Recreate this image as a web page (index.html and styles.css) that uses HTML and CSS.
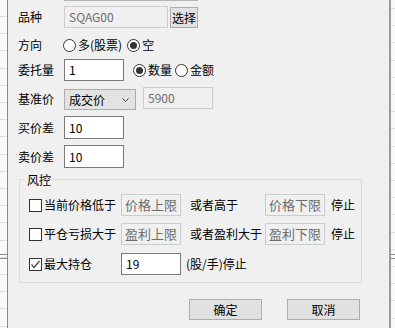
FILE: index.html
```html
<!DOCTYPE html>
<html lang="zh-CN">
<head>
<meta charset="utf-8">
<title>风控设置</title>
<link rel="stylesheet" href="styles.css">
</head>
<body>
<div class="screen">
  <div class="strip strip-left"></div>
  <div class="dialog">
    <div class="cut"></div>
    <div class="row r1">
      <span class="label">品种</span>
      <span class="input off w-code">SQAG00</span>
      <span class="btn btn-small">选择</span>
    </div>
    <div class="row r2">
      <span class="label">方向</span>
      <span class="radio first"><span class="radio-mark"></span>多(股票)</span>
      <span class="radio gap5"><span class="radio-mark on"></span>空</span>
    </div>
    <div class="row r3">
      <span class="label">委托量</span>
      <span class="input w60">1</span>
      <span class="radio gap9"><span class="radio-mark on"></span>数量</span>
      <span class="radio gap3"><span class="radio-mark"></span>金额</span>
    </div>
    <div class="row r4">
      <span class="label lbl-mid">基准价</span>
      <span class="combo">成交价<svg class="chev" width="7" height="4" viewBox="0 0 7 4"><polyline points="0.5,0.5 3.5,3.5 6.5,0.5" fill="none" stroke="#444" stroke-width="1"/></svg></span>
      <span class="input off w70">5900</span>
    </div>
    <div class="row r5">
      <span class="label">买价差</span>
      <span class="input w60 tall">10</span>
    </div>
    <div class="row r6">
      <span class="label">卖价差</span>
      <span class="input w60 tall">10</span>
    </div>
    <div class="group">
      <span class="legend">风控</span>
      <div class="grow ga">
        <span class="chk-label"><span class="check"></span>当前价格低于</span>
        <span class="input off w60 ph">价格上限</span>
        <span class="mid">或者高于</span>
        <span class="input off w60 ph">价格下限</span>
        <span class="stop">停止</span>
      </div>
      <div class="grow gb">
        <span class="chk-label"><span class="check"></span>平仓亏损大于</span>
        <span class="input off w60 ph">盈利上限</span>
        <span class="mid">或者盈利大于</span>
        <span class="input off w60 ph">盈利下限</span>
        <span class="stop">停止</span>
      </div>
      <div class="grow gc">
        <span class="chk-label"><span class="check on"><svg width="11" height="11" viewBox="0 0 11 11"><polyline points="1.5,5.5 4,8.5 9.5,2" fill="none" stroke="#444" stroke-width="1.2"/></svg></span>最大持仓</span>
        <span class="input w60">19</span>
        <span class="unit">(股/手)停止</span>
      </div>
    </div>
    <div class="buttons">
      <span class="btn">确定</span>
      <span class="btn">取消</span>
    </div>
  </div>
  <div class="strip strip-right"></div>
</div>
</body>
</html>
```
FILE: styles.css
```css
* { box-sizing: border-box; }
html, body { margin: 0; padding: 0; }
body {
  font-family: "Noto Sans CJK SC", "Microsoft YaHei", sans-serif;
  font-size: 12px;
  line-height: 14px;
  color: #000;
  background: #f8f8f8;
}
.screen {
  display: flex;
  width: 395px;
  height: 328px;
  overflow: hidden;
}
.strip {
  background-color: #f9f9f9;
  background-image:
    linear-gradient(to bottom, transparent 254px, #8c8c8c 254px, #8c8c8c 255px, transparent 255px, transparent 258px, #8c8c8c 258px, #8c8c8c 259px, transparent 259px),
    repeating-linear-gradient(to bottom, transparent 0, transparent 16px, #dedede 16px, #dedede 17px, transparent 17px, transparent 17.2px);
}
.strip-left { width: 7px; }
.strip-right {
  width: 4px;
  background-image:
    linear-gradient(to bottom, transparent 254px, #8c8c8c 254px, #8c8c8c 255px, transparent 255px, transparent 258px, #8c8c8c 258px, #8c8c8c 259px, transparent 259px),
    repeating-linear-gradient(to bottom, transparent 0, transparent 8px, #dedede 8px, #dedede 9px, transparent 9px, transparent 17.2px);
}
.dialog {
  width: 384px;
  border-left: 1px solid #8a8a8a;
  border-right: 2px solid #9a9a9a;
  background: #f0f0f0;
  display: flex;
  flex-direction: column;
}
.cut {
  height: 1px;
  width: 134px;
  margin-left: 56px;
  background: #b4b4b4;
  flex: none;
}
.row {
  display: flex;
  align-items: center;
  height: 22px;
  padding-left: 10px;
  flex: none;
}
.label { width: 46px; flex: none; }
.r1 { margin-top: 5px; }
.r2 { margin-top: 6px; }
.r3 { margin-top: 3px; }
.r4 { margin-top: 6px; height: 23px; align-items: flex-start; }
.r4 .lbl-mid { align-self: center; }
.r5 { margin-top: 6px; height: 23px; }
.r6 { margin-top: 6px; height: 23px; }

.input {
  height: 22px;
  border: 1px solid #7a7a7a;
  background: #fff;
  padding: 0 4px;
  display: flex;
  align-items: center;
  flex: none;
  white-space: nowrap;
}
.input.tall { height: 23px; }
.input.off {
  border-color: #cccccc;
  background: #f0f0f0;
  color: #6d6d6d;
}
.input.ph { font-size: 13px; padding: 0 3px; }
.w-code { width: 104px; }
.w60 { width: 60px; }
.w70 { width: 70px; margin-left: 7px; }

.btn {
  width: 73px;
  height: 21px;
  border: 1px solid #adadad;
  background: #e1e1e1;
  display: flex;
  align-items: center;
  justify-content: center;
  flex: none;
}
.btn-small {
  width: 28px;
  margin-left: 2px;
  align-self: flex-end;
}

.radio {
  display: flex;
  align-items: center;
  gap: 2px;
  flex: none;
}
.radio.first { margin-left: -1px; }
.radio.gap5 { margin-left: 5px; }
.radio.gap9 { margin-left: 9px; }
.radio.gap3 { margin-left: 3px; }
.radio-mark {
  width: 13px;
  height: 13px;
  border-radius: 50%;
  border: 1px solid #333;
  background: #fff;
  display: flex;
  align-items: center;
  justify-content: center;
}
.radio-mark.on::after {
  content: "";
  width: 7px;
  height: 7px;
  border-radius: 50%;
  background: #333;
}

.combo {
  width: 72px;
  height: 21px;
  margin-top: 2px;
  border: 1px solid #adadad;
  background: #e3e3e3;
  display: flex;
  align-items: center;
  padding-left: 4px;
  flex: none;
}
.chev { margin-left: auto; margin-right: 6px; }

.group {
  margin-top: 11px;
  margin-left: 11px;
  width: 343px;
  height: 104px;
  border: 1px solid #dcdcdc;
  padding-left: 9px;
  display: flex;
  flex-direction: column;
  flex: none;
}
.legend {
  margin-top: -7px;
  margin-left: -4px;
  padding: 0 2px;
  background: #f0f0f0;
  align-self: flex-start;
}
.grow {
  display: flex;
  align-items: center;
  height: 22px;
  flex: none;
}
.ga { margin-top: 7px; }
.gb { margin-top: 7px; }
.gc { margin-top: 8px; }
.chk-label {
  width: 92px;
  display: flex;
  align-items: center;
  gap: 2px;
  flex: none;
  white-space: nowrap;
}
.check {
  width: 13px;
  height: 13px;
  border: 1px solid #333;
  background: #fff;
  display: flex;
  align-items: center;
  justify-content: center;
  flex: none;
}
.mid { width: 75px; margin-left: 9px; white-space: nowrap; flex: none; }
.stop { margin-left: 6px; }
.unit { margin-left: 5px; }

.buttons {
  display: flex;
  gap: 25px;
  margin-top: 16px;
  margin-left: 181px;
  flex: none;
}
```
